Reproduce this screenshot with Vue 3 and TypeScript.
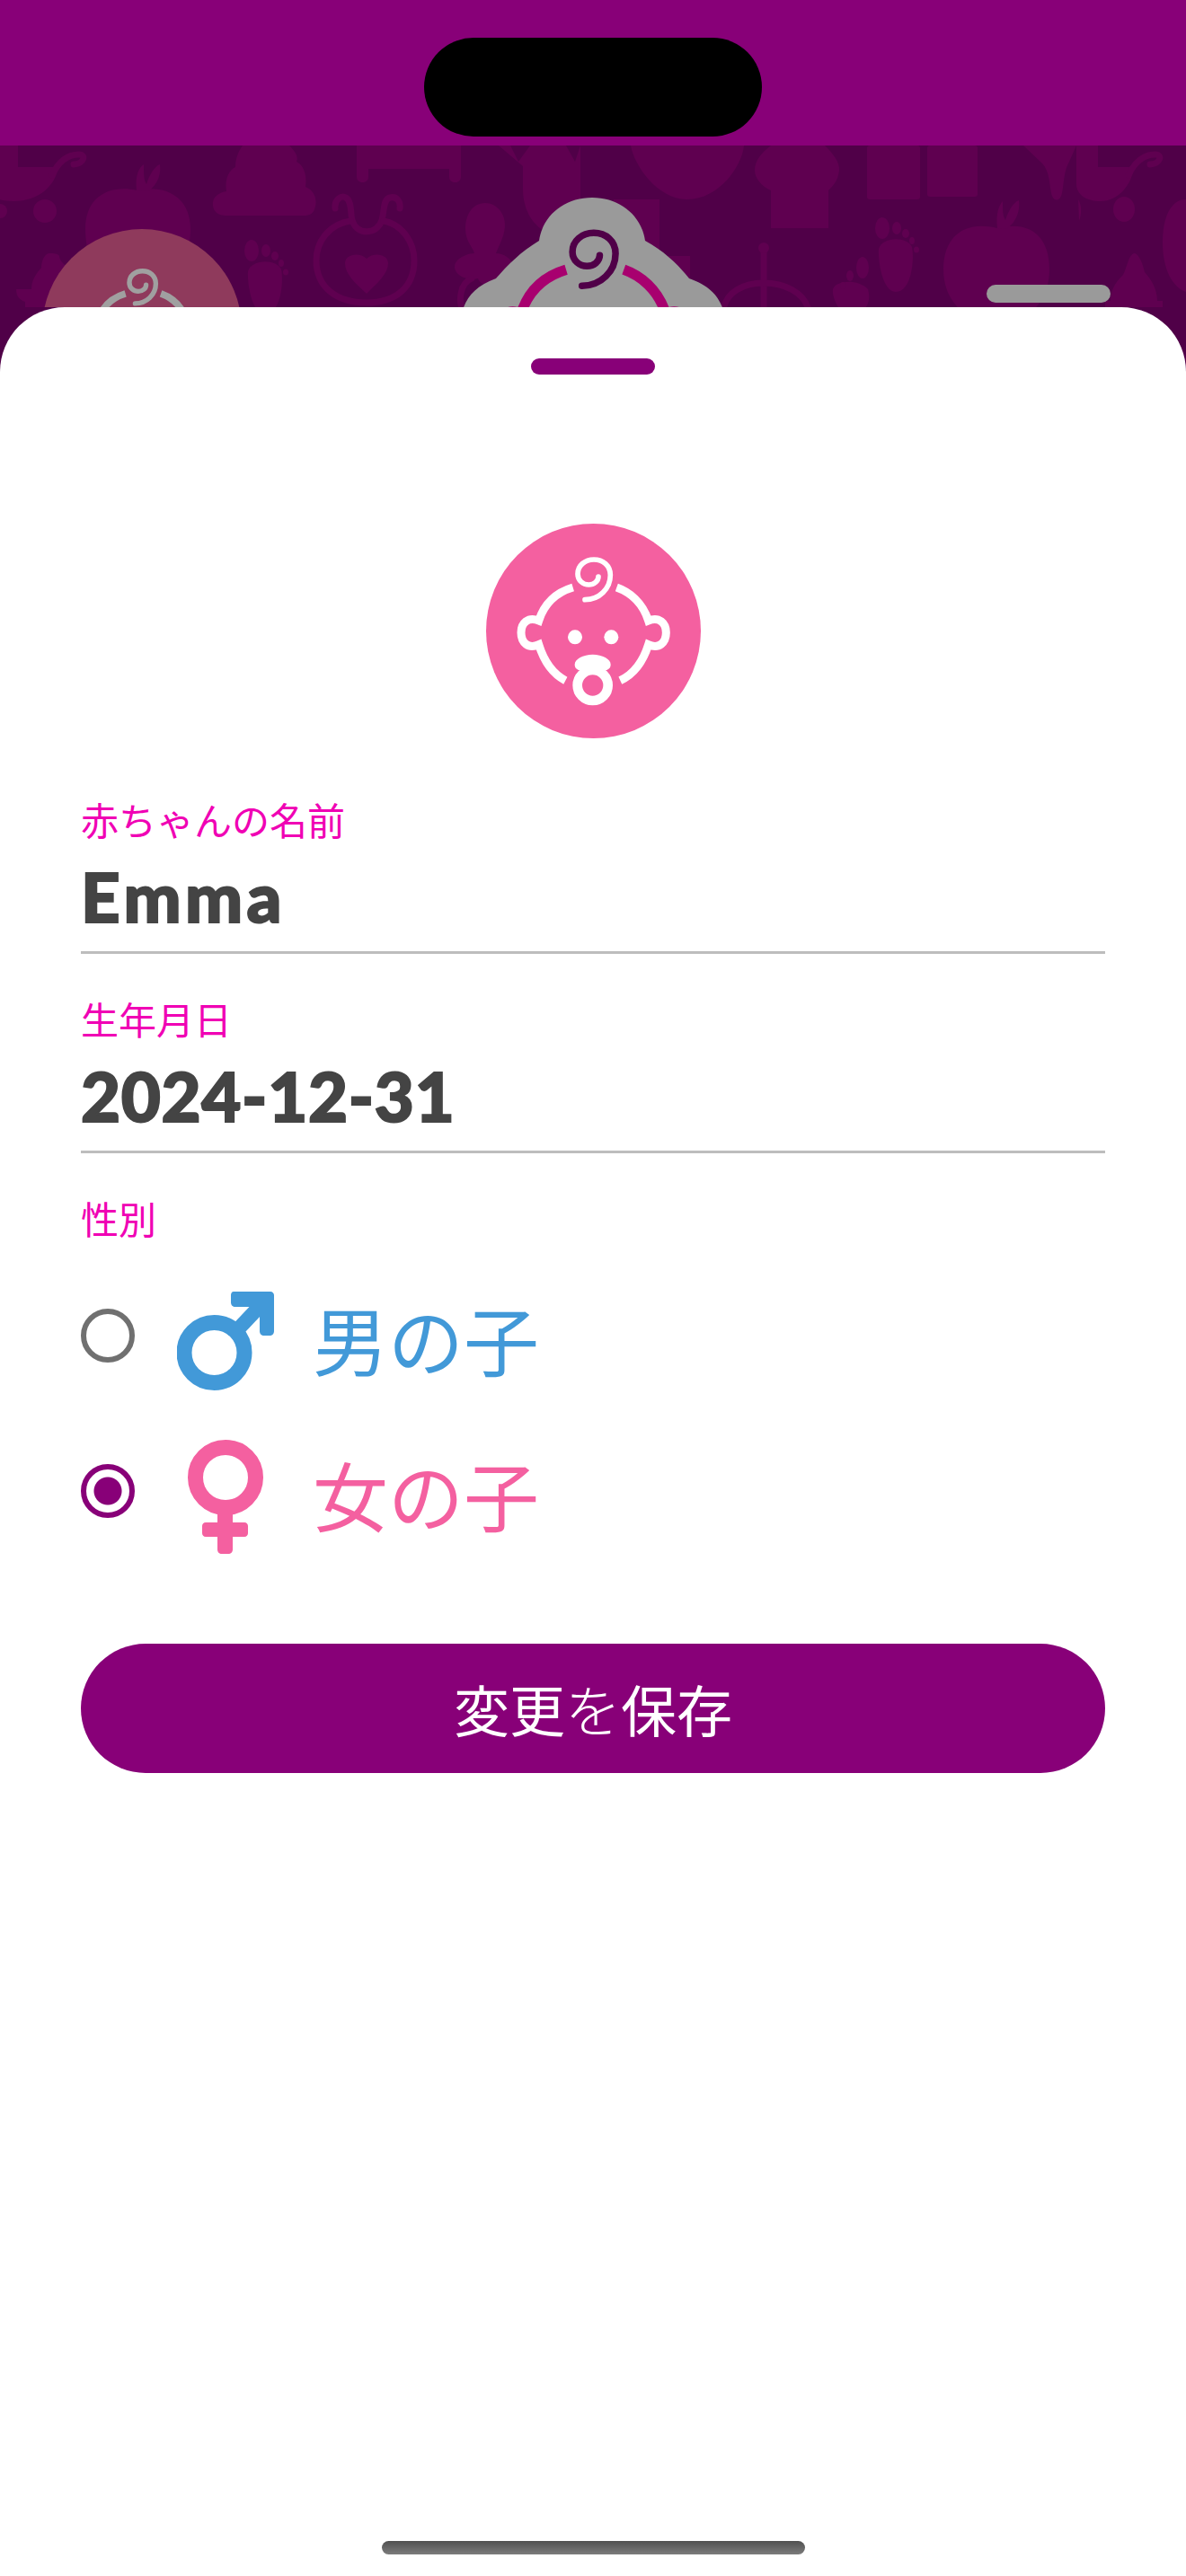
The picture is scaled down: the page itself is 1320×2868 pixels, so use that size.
<script setup lang="ts">
import { ref } from 'vue'

interface GenderOption {
  id: 'boy' | 'girl'
  label: string
}

const name = ref('Emma')
const birthday = ref('2024-12-31')
const gender = ref<GenderOption['id']>('girl')

const genders: GenderOption[] = [
  { id: 'boy', label: '男の子' },
  { id: 'girl', label: '女の子' },
]

// baby face, drawn around (480, 426)
const spiral = 'M452 322C500 322 537 285 537 240C537 208 512 188 482 188C452 188 428 208 428 236C428 258 446 272 465 272C482 272 497 260 497 245'
const head = 'M412 281C362 296 318 330 298 392C262 378 239 400 239 432C239 465 262 488 298 472C316 530 345 570 387 592M558 281C600 296 644 330 664 392C700 378 723 400 723 432C723 465 700 488 664 472C646 530 617 570 570 592'
const shield = 'M478 505C510 505 538 520 538 538C538 555 525 562 478 562C430 562 418 555 418 538C418 520 446 505 478 505Z'
</script>

<template>
  <div class="screen">
    <div class="status-bar">
      <div class="island"></div>
    </div>

    <svg class="backdrop" viewBox="0 162 1320 180" width="1320" height="180">
      <rect x="0" y="162" width="1320" height="180" fill="#500048" />
      <g class="pattern">
        <!-- stroller -->
        <path d="M-10 162H20V186H65C62 205 45 224 15 224C0 224-10 220-10 215Z" />
        <path class="line" d="M58 195C66 178 76 172 88 172C96 172 94 182 82 183" />
        <circle cx="50" cy="235" r="13" />
        <circle cx="0" cy="235" r="8" />
        <!-- apple -->
        <path d="M153 212C120 205 95 220 95 255C95 290 115 342 153 342C190 342 212 290 212 255C212 220 185 205 153 212Z" />
        <path d="M152 212C150 195 155 186 160 183C160 195 160 200 163 205C166 195 172 185 178 183C180 198 172 208 165 213Z" />
        <!-- poo pile -->
        <path d="M270 162H322C330 170 332 175 330 180C338 184 342 195 340 208C350 212 353 222 351 230C349 238 345 240 338 240H250C240 240 236 232 237 225C238 218 245 214 252 213C250 200 254 190 262 186C262 175 266 168 270 162Z" />
        <!-- crib -->
        <path d="M397 162H513V197C513 205 500 205 500 197V188H410V197C410 205 397 205 397 197Z" />
        <!-- bib -->
        <g class="line">
          <path d="M373 232C372 222 380 217 385 220C392 224 390 240 392 245C396 262 420 262 425 245C428 235 426 222 434 220C442 218 446 225 445 232" />
          <path d="M390 246C365 250 352 270 352 290C352 320 375 337 408 337C440 337 461 320 461 290C461 270 448 250 427 246" />
        </g>
        <path d="M408 327C395 315 384 305 384 293C384 283 400 280 408 288C416 280 432 283 432 293C432 305 420 315 408 327Z" />
        <!-- feet -->
        <g id="foot">
          <path d="M295 350C280 350 275 315 276 302C280 288 308 288 313 300C316 315 312 350 295 350Z" />
          <ellipse cx="280" cy="279" rx="8" ry="12" />
          <ellipse cx="296" cy="279" rx="5" ry="7" />
          <ellipse cx="306" cy="285" rx="4" ry="5" />
          <ellipse cx="313" cy="293" rx="3" ry="4" />
          <ellipse cx="318" cy="303" rx="3" ry="3.5" />
        </g>
        <use href="#foot" transform="translate(702 -25)" />
        <path d="M945 350C932 348 926 330 927 322C930 312 955 310 966 322C970 335 965 350 945 350Z" />
        <ellipse cx="960" cy="298" rx="7" ry="12" />
        <ellipse cx="946" cy="307" rx="4" ry="6" />
        <ellipse cx="938" cy="318" rx="3" ry="4" />
        <!-- bottles -->
        <path d="M55 282C50 282 46 290 46 298C40 305 35 312 35 322H18C18 330 22 334 28 336V345H80V300C72 296 66 290 66 285C64 282 60 282 55 282Z" />
        <path d="M1262 282C1256 284 1255 296 1250 306C1240 315 1236 325 1236 335H1230V345H1294V335H1288C1288 320 1280 310 1274 303C1272 295 1268 282 1262 282Z" />
        <!-- onesie -->
        <path d="M555 162H568L577 180L590 162H630L640 180L646 162V225C646 240 640 262 625 262C600 262 582 240 582 210V185Z" />
        <!-- rattle -->
        <path d="M540 226C525 226 518 240 518 255C518 268 526 275 528 282C520 282 505 288 506 298C508 310 525 312 532 310C534 318 545 318 548 312C558 312 572 305 571 296C570 288 560 282 552 282C556 272 562 262 562 250C562 238 553 226 540 226Z" />
        <path class="line" d="M525 310C512 315 510 335 515 345M552 314C566 318 568 335 562 345" />
        <!-- book -->
        <rect x="683" y="222" width="51" height="80" />
        <rect x="740" y="285" width="28" height="60" />
        <!-- bowl -->
        <path d="M702 162H828C826 185 800 222 765 222C732 222 706 185 702 162Z" />
        <!-- cake -->
        <path d="M858 162H918C926 170 935 180 934 190C932 202 928 206 922 212V254H858V212C848 208 840 198 840 190C840 178 848 170 858 162Z" />
        <!-- rectangles -->
        <rect x="965" y="162" width="59" height="60" rx="3" />
        <rect x="1032" y="162" width="56" height="57" rx="3" />
        <!-- spoon -->
        <path d="M1139 162H1198L1190 180C1184 190 1184 205 1182 215C1180 225 1172 225 1170 215C1168 205 1168 190 1160 182Z" />
        <!-- stroller again -->
        <path d="M1198 162H1222V186H1262C1260 205 1245 224 1225 224C1208 224 1198 216 1198 205Z" />
        <path class="line" d="M1256 195C1264 178 1274 172 1286 172C1294 172 1292 182 1280 183" />
        <ellipse cx="1251" cy="233" rx="12" ry="14" />
        <path d="M1200 222C1204 228 1204 238 1201 246Z" />
        <!-- apple again -->
        <path d="M1110 254C1075 245 1050 262 1050 300C1050 335 1075 360 1110 360C1145 360 1168 335 1168 300C1168 262 1145 245 1110 254Z" />
        <path d="M1110 254C1108 238 1112 228 1116 224C1116 235 1116 240 1119 245C1122 235 1128 225 1134 223C1136 238 1128 250 1120 255Z" />
        <!-- mobile -->
        <g class="line">
          <path d="M850 276V342" />
          <path d="M805 345C808 325 828 315 850 315C872 315 895 325 900 345" />
        </g>
        <circle cx="850" cy="276" r="6" />
        <!-- right edge -->
        <path d="M1320 222C1304 222 1294 240 1294 270C1294 300 1305 320 1320 325Z" />
      </g>

      <!-- dimmed avatar on the left -->
      <circle cx="158" cy="366" r="111" fill="#8f3a5c" />
      <g class="face" transform="translate(158 366) scale(0.27) translate(-480 -426)" stroke="#a0a0a0" stroke-width="28">
        <path :d="spiral" stroke-width="20" stroke-linecap="round" />
        <path :d="head" />
      </g>

      <!-- dimmed selected avatar in the middle -->
      <path d="M600 268C604 240 628 220 659 220C690 220 714 240 718 268C740 280 755 295 767 310C790 318 800 330 805 345H515C520 330 530 318 552 310C565 295 580 280 600 268Z" fill="#9a9a9a" />
      <g class="face" transform="translate(660 364) scale(0.44) translate(-480 -426)" stroke-width="26">
        <path :d="head" stroke="#a8006f" />
        <path :d="spiral" stroke="#500048" stroke-width="17" stroke-linecap="round" />
      </g>

      <rect x="1098" y="317" width="138" height="20" rx="10" fill="#9a9a9a" />
    </svg>

    <div class="sheet">
      <div class="handle"></div>

      <svg class="avatar" viewBox="122 68 717 717" width="239" height="239">
        <circle cx="480.5" cy="426.5" r="358.5" fill="#f460a0" />
        <g class="face" stroke="#fff" stroke-width="27">
          <path :d="spiral" stroke-width="17" stroke-linecap="round" />
          <path :d="head" />
        </g>
        <circle cx="419" cy="447" r="24" fill="#fff" />
        <circle cx="540" cy="447" r="24" fill="#fff" />
        <path :d="shield" fill="#fff" />
        <circle cx="478" cy="608" r="51" fill="none" stroke="#fff" stroke-width="32" />
      </svg>

      <form class="form" @submit.prevent>
        <div class="field">
          <div class="label">赤ちゃんの名前</div>
          <div class="value short">{{ name }}</div>
        </div>
        <div class="field">
          <div class="label">生年月日</div>
          <div class="value">{{ birthday }}</div>
        </div>

        <div class="label gender-label">性別</div>
        <div class="genders">
          <div v-for="g in genders" :key="g.id" class="gender" :class="g.id" @click="gender = g.id">
            <span class="radio" :class="{ on: gender === g.id }"></span>
            <svg v-if="g.id === 'boy'" class="sign" viewBox="0 0 108 111" width="108" height="111">
              <circle cx="41.5" cy="68" r="33.5" fill="none" stroke="currentColor" stroke-width="17" />
              <path d="M65 45L99 9" fill="none" stroke="currentColor" stroke-width="16" />
              <path d="M63 0H104C106.200 0 108 1.800 108 4V44C108 47 106 49 103 49H97C94 49 92 47 92 44V17H65C62 17 60 15 60 12V4C60 1.800 61 0 63 0Z" fill="currentColor" />
            </svg>
            <svg v-else class="sign" viewBox="0 0 108 127" width="108" height="127">
              <circle cx="54" cy="42" r="33.500" fill="none" stroke="currentColor" stroke-width="17" />
              <path d="M45 80H62V92H75C77.500 92 79 94 79 96V104C79 106 77.500 108 75 108H62V122C62 125 60 127 57 127H50C47 127 45 125 45 122V108H32C29.500 108 28 106 28 104V96C28 94 29.500 92 32 92H45Z" fill="currentColor" />
            </svg>
            <span class="gender-name">{{ g.label }}</span>
          </div>
        </div>

        <button class="save" type="submit">変更<span class="kana">を</span>保存</button>
      </form>

      <div class="home-indicator"></div>
    </div>
  </div>
</template>

<style>
html, body {
  margin: 0;
  background: #fff;
}
</style>

<style scoped>
.screen {
  width: 1320px;
  height: 2868px;
  display: flex;
  flex-direction: column;
  overflow: hidden;
  font-family: "Noto Sans CJK JP", "Noto Sans", sans-serif;
  background: #500048;
}

.status-bar {
  height: 162px;
  flex-shrink: 0;
  box-sizing: border-box;
  padding-top: 42px;
  display: flex;
  justify-content: center;
  background: #880078;
}
.island {
  width: 376px;
  height: 110px;
  border-radius: 55px;
  background: #000;
}

.backdrop {
  display: block;
  flex-shrink: 0;
}
.pattern { fill: #5f0050; }
.pattern .line {
  fill: none;
  stroke: #5f0050;
  stroke-width: 7;
  stroke-linecap: round;
}
.face { fill: none; }

.sheet {
  flex: 1;
  display: flex;
  flex-direction: column;
  align-items: center;
  padding-top: 57px;
  background: #fff;
  border-radius: 72px 72px 0 0;
}
.handle {
  width: 138px;
  height: 18px;
  border-radius: 9px;
  background: #880078;
}
.avatar {
  display: block;
  margin-top: 166px;
}

.form {
  width: 1140px;
  margin-top: 64px;
  display: flex;
  flex-direction: column;
}
.label {
  height: 52px;
  font-size: 42px;
  line-height: 52px;
  color: #f000b4;
}
.field {
  height: 222px;
}
.value {
  height: 124px;
  box-sizing: border-box;
  padding-top: 13px;
  font-family: Lato, "Noto Sans", sans-serif;
  font-size: 76px;
  font-weight: 900;
  line-height: 94px;
  letter-spacing: 0.7px;
  color: #444;
  -webkit-text-stroke: 2px #444;
  border-bottom: 3px solid #bdbdbd;
}
.value.short {
  letter-spacing: 4.5px;
}
.genders {
  margin-top: 26px;
  display: flex;
  flex-direction: column;
}
.gender {
  height: 173px;
  display: flex;
  align-items: center;
  cursor: pointer;
}
.gender.boy { color: #4299d8; }
.gender.girl { color: #f460a0; }
.radio {
  width: 60px;
  height: 60px;
  flex-shrink: 0;
  box-sizing: border-box;
  margin-bottom: 16px;
  border: 6px solid #707070;
  border-radius: 50%;
  background: #fff;
}
.radio.on {
  border-color: #880078;
  background: radial-gradient(circle, #880078 0 15px, #fff 16px);
}
.sign {
  display: block;
  flex-shrink: 0;
  margin-left: 47px;
  margin-bottom: 3px;
}
.gender-name {
  margin-left: 43px;
  margin-bottom: 10px;
  font-size: 84px;
  line-height: 100px;
}

.save {
  height: 144px;
  margin-top: 76px;
  padding: 0;
  border: none;
  border-radius: 72px;
  background: #880078;
  color: #fff;
  font-family: inherit;
  font-size: 62px;
  cursor: pointer;
}
.kana { font-weight: 300; }

.home-indicator {
  width: 471px;
  height: 15px;
  margin-top: auto;
  margin-bottom: 24px;
  border-radius: 8px;
  background: linear-gradient(#505050, #7c7c7c);
}
</style>
